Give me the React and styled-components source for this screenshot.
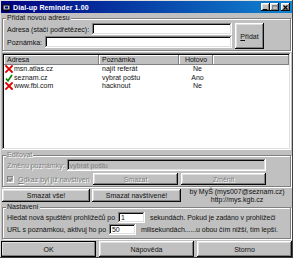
import React from "react";
import styled, { createGlobalStyle } from "styled-components";

const Global = createGlobalStyle`
  html, body { margin: 0; padding: 0; background: #c0c0c0; }
  body {
    font-family: "Liberation Sans", Arial, sans-serif;
    font-size: 7px;
    color: #111;
  }
  * { box-sizing: border-box; }
`;

const raised = `
  background: #c0c0c0;
  box-shadow: inset -1px -1px #0a0a0a, inset 1px 1px #fff,
    inset -2px -2px #808080, inset 2px 2px #dfdfdf;
`;

const sunken = `
  box-shadow: inset -1px -1px #fff, inset 1px 1px #808080,
    inset -2px -2px #dfdfdf, inset 2px 2px #0a0a0a;
`;

const Window = styled.div`
  width: 293px;
  height: 258px;
  padding: 1px 1px 2px;
  background: #c0c0c0;
  box-shadow: inset -1px -1px #404040, inset 1px 1px #dfdfdf;
  display: flex;
  flex-direction: column;
`;

const TitleBar = styled.div`
  height: 12px;
  flex: none;
  display: flex;
  align-items: center;
  gap: 2px;
  padding: 0 2px 0 1px;
  background: linear-gradient(90deg, #000080, #1084d0);
`;

const Title = styled.div`
  flex: 1;
  color: #fff;
  font-weight: bold;
  font-size: 7px;
  letter-spacing: 0.1px;
  white-space: nowrap;
`;

const Controls = styled.div`
  display: flex;
`;

const ControlButton = styled.div`
  ${raised}
  width: 9px;
  height: 8px;
  margin-left: ${(p) => (p.$gap ? "2px" : "0")};
  display: flex;
  align-items: center;
  justify-content: center;
`;

const Body = styled.div`
  flex: 1;
  display: flex;
  flex-direction: column;
  padding: 0 1px;
`;

const Group = styled.fieldset`
  margin: ${(p) => p.$mt || 0}px 0 0;
  padding: 0 4px 2px;
  height: ${(p) => p.$h}px;
  flex: none;
  border: 1px solid #808080;
  box-shadow: inset 1px 1px #fff, 1px 1px #fff;
  min-width: 0;
`;

const Legend = styled.legend`
  padding: 0 1px;
  margin-left: -1px;
  background: #c0c0c0;
  line-height: 8px;
  color: ${(p) => (p.$disabled ? "#808080" : "#111")};
  text-shadow: ${(p) => (p.$disabled ? "1px 1px #fff" : "none")};
`;

const AddLayout = styled.div`
  display: flex;
  gap: 3px;
  margin-top: 1px;
  padding-right: 22px;
`;

const Fields = styled.div`
  flex: 1;
  display: flex;
  flex-direction: column;
  gap: 1px;
`;

const FieldRow = styled.div`
  display: flex;
  align-items: center;
  gap: ${(p) => p.$gap || 2}px;
  height: 12px;
`;

const Label = styled.span`
  white-space: nowrap;
  color: ${(p) => (p.$disabled ? "#808080" : "#111")};
  text-shadow: ${(p) => (p.$disabled ? "1px 1px #fff" : "none")};
`;

const Input = styled.div`
  ${sunken}
  background: ${(p) => (p.$disabled ? "#c0c0c0" : "#fff")};
  color: ${(p) => (p.$disabled ? "#808080" : "#111")};
  height: ${(p) => p.$h || 12}px;
  width: ${(p) => (p.$w ? p.$w + "px" : "auto")};
  flex: ${(p) => (p.$w ? "none" : 1)};
  margin: ${(p) => (p.$inline ? "0 5px 0 3px" : "0")};
  padding: 0 3px;
  display: flex;
  align-items: center;
  white-space: nowrap;
`;

const Button = styled.div`
  ${raised}
  width: ${(p) => (p.$w ? p.$w + "px" : "auto")};
  flex: ${(p) => (p.$w ? "none" : 1)};
  height: ${(p) => p.$h}px;
  display: flex;
  align-items: center;
  justify-content: center;
  white-space: nowrap;
  color: ${(p) => (p.$disabled ? "#808080" : "#111")};
  text-shadow: ${(p) => (p.$disabled ? "1px 1px #fff" : "none")};
  ${(p) => (p.$default ? "outline: 1px solid #000; outline-offset: -1px;" : "")}
`;

const Key = styled.span`
  text-decoration: underline;
`;

const List = styled.div`
  ${sunken}
  background: #fff;
  margin-top: 2px;
  height: 97px;
  flex: none;
  padding: 2px;
`;

const cols = "95px 80px 34px 1fr";

const Header = styled.div`
  display: grid;
  grid-template-columns: ${cols};
  height: 10px;
`;

const HeadCell = styled.div`
  background: #c0c0c0;
  box-shadow: inset -1px -1px #808080, inset 1px 1px #fff;
  padding: 0 3px;
  line-height: 10px;
  text-align: ${(p) => p.$align || "left"};
`;

const Row = styled.div`
  display: grid;
  grid-template-columns: ${cols};
  height: 8.5px;
  line-height: 8.5px;
`;

const Cell = styled.div`
  display: flex;
  align-items: center;
  gap: 1px;
  padding-left: ${(p) => (p.$icon ? 1 : 3)}px;
  justify-content: ${(p) => (p.$center ? "center" : "flex-start")};
  white-space: nowrap;
`;

const EditLayout = styled.div`
  display: flex;
  flex-direction: column;
  gap: 2px;
  padding-right: 20px;
`;

const Check = styled.div`
  width: 7px;
  height: 7px;
  background: #c0c0c0;
  box-shadow: inset -1px -1px #fff, inset 1px 1px #808080;
  display: flex;
  align-items: center;
  justify-content: center;
  flex: none;
`;

const EditBottom = styled.div`
  display: flex;
  align-items: center;
  gap: 3px;
  height: 12px;
`;

const CheckLabel = styled.div`
  display: flex;
  align-items: center;
  gap: 4px;
  width: 83px;
  flex: none;
`;

const ActionRow = styled.div`
  display: flex;
  align-items: center;
  gap: 2px;
  margin-top: 2px;
  height: 13px;
  flex: none;
`;

const Credit = styled.div`
  flex: 1;
  text-align: center;
  line-height: 8px;
`;

const Settings = styled.div`
  display: flex;
  flex-direction: column;
`;

const SettingsLine = styled.div`
  display: flex;
  align-items: center;
  height: 12px;
  white-space: nowrap;
  letter-spacing: -0.05px;
`;

const Footer = styled.div`
  display: flex;
  gap: 3px;
  margin-top: 2px;
  flex: none;
`;

const Cross = () => (
  <svg width="8" height="8" viewBox="0 0 8 8">
    <path d="M1 1L7 7M7 1L1 7" stroke="#e00000" strokeWidth="1.8" strokeLinecap="square" />
  </svg>
);

const Tick = () => (
  <svg width="8" height="8" viewBox="0 0 8 8">
    <path d="M1 4.5L3 6.8L7 1" stroke="#008000" strokeWidth="1.6" fill="none" />
  </svg>
);

const AppIcon = () => (
  <svg width="9" height="9" viewBox="0 0 9 9">
    <rect x="1" y="2" width="7" height="5" fill="#c0c0c0" stroke="#000" strokeWidth="1" />
    <rect x="3" y="3.5" width="3" height="2" fill="#000080" />
    <path d="M2 8h5" stroke="#000" />
  </svg>
);

const rows = [
  { ok: false, url: "msn.atlas.cz", note: "najít referát", done: "Ne" },
  { ok: true, url: "seznam.cz", note: "vybrat poštu", done: "Ano" },
  { ok: false, url: "www.fbi.com", note: "hacknout", done: "Ne" },
];

export default function App() {
  return (
    <>
      <Global />
      <Window>
        <TitleBar>
          <AppIcon />
          <Title>Dial-up Reminder 1.00</Title>
          <Controls>
            <ControlButton>
              <svg width="5" height="5" viewBox="0 0 5 5">
                <path d="M0 4.5h4" stroke="#000" />
              </svg>
            </ControlButton>
            <ControlButton>
              <svg width="6" height="5" viewBox="0 0 6 5">
                <rect x="0.5" y="0.5" width="5" height="4" fill="none" stroke="#808080" />
                <path d="M0 1h6" stroke="#808080" />
              </svg>
            </ControlButton>
            <ControlButton $gap>
              <svg width="5" height="5" viewBox="0 0 5 5">
                <path d="M0.5 0.5L4.5 4.5M4.5 0.5L0.5 4.5" stroke="#000" strokeWidth="1.2" />
              </svg>
            </ControlButton>
          </Controls>
        </TitleBar>

        <Body>
          <Group $h={37} $mt={1}>
            <Legend>Přidat novou adresu</Legend>
            <AddLayout>
              <Fields>
                <FieldRow $gap={3}>
                  <Label>Adresa (stačí podřetězec):</Label>
                  <Input />
                </FieldRow>
                <FieldRow $gap={3}>
                  <Label>Poznámka:</Label>
                  <Input />
                </FieldRow>
              </Fields>
              <Button $w={29} $h={26}>
                <span>
                  <Key>P</Key>řidat
                </span>
              </Button>
            </AddLayout>
          </Group>

          <List>
            <Header>
              <HeadCell>Adresa</HeadCell>
              <HeadCell>Poznámka</HeadCell>
              <HeadCell $align="center">Hotovo</HeadCell>
              <HeadCell />
            </Header>
            {rows.map((r) => (
              <Row key={r.url}>
                <Cell $icon>
                  {r.ok ? <Tick /> : <Cross />}
                  {r.url}
                </Cell>
                <Cell>{r.note}</Cell>
                <Cell $center>{r.done}</Cell>
                <Cell />
              </Row>
            ))}
          </List>

          <Group $h={36} $mt={1}>
            <Legend $disabled>Editovat</Legend>
            <EditLayout>
              <FieldRow $gap={2}>
                <Label $disabled>Změnu poznámky:</Label>
                <Input $disabled>vybrat poštu</Input>
              </FieldRow>
              <EditBottom>
                <CheckLabel>
                  <Check>
                    <svg width="5" height="5" viewBox="0 0 5 5">
                      <path d="M0.5 2.5L2 4L4.5 1" stroke="#808080" strokeWidth="1.2" fill="none" />
                    </svg>
                  </Check>
                  <Label $disabled>
                    <Key>O</Key>dkaz byl již navštíven
                  </Label>
                </CheckLabel>
                <Button $h={12} $disabled>Smazat</Button>
                <Button $h={12} $disabled>Změnit</Button>
              </EditBottom>
            </EditLayout>
          </Group>

          <ActionRow>
            <Button $w={88} $h={13}>Smazat vše!</Button>
            <Button $w={89} $h={13}>Smazat navštívené!</Button>
            <Credit>
              by MyŠ (mys007@seznam.cz)
              <br />
              http://mys.kgb.cz
            </Credit>
          </ActionRow>

          <Group $h={36} $mt={1}>
            <Legend>Nastavení</Legend>
            <Settings>
              <SettingsLine>
                Hledat nová spuštění prohlížečů po
                <Input $w={27} $h={11} $inline>1</Input>
                sekundách. Pokud je zadáno v prohlížeči
              </SettingsLine>
              <SettingsLine>
                URL s poznámkou, aktivuj ho po
                <Input $w={27} $h={11} $inline>50</Input>
                milisekundách......u obou čím nižší, tím lepší.
              </SettingsLine>
            </Settings>
          </Group>
        </Body>

        <Footer>
          <Button $h={16} $default>OK</Button>
          <Button $h={16}>Nápověda</Button>
          <Button $h={16}>Storno</Button>
        </Footer>
      </Window>
    </>
  );
}
